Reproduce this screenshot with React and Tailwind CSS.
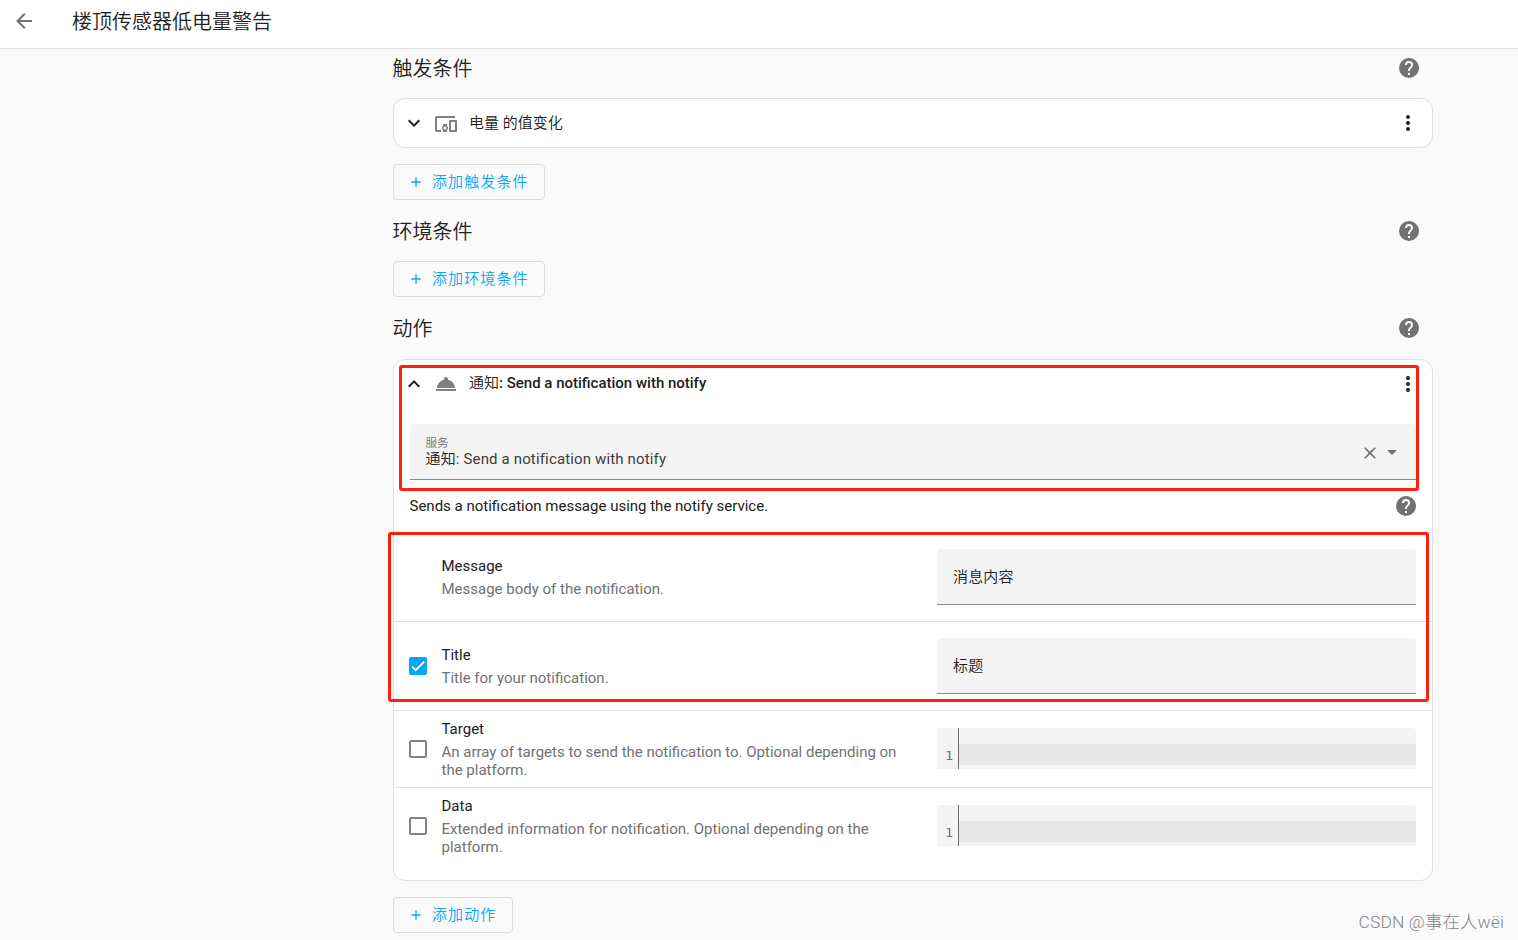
import clsx from "clsx";

const icons = {
  back: "M20,11V13H8L13.5,18.5L12.08,19.92L4.16,12L12.08,4.08L13.5,5.5L8,11H20Z",
  down: "M7.41,8.58L12,13.17L16.59,8.58L18,10L12,16L6,10L7.41,8.58Z",
  up: "M7.41,15.41L12,10.83L16.59,15.41L18,14L12,8L6,14L7.41,15.41Z",
  dots: "M12,16A2,2 0 0,1 14,18A2,2 0 0,1 12,20A2,2 0 0,1 10,18A2,2 0 0,1 12,16M12,10A2,2 0 0,1 14,12A2,2 0 0,1 12,14A2,2 0 0,1 10,12A2,2 0 0,1 12,10M12,4A2,2 0 0,1 14,6A2,2 0 0,1 12,8A2,2 0 0,1 10,6A2,2 0 0,1 12,4Z",
  devices:
    "M3 6H21V4H3C1.9 4 1 4.9 1 6V18C1 19.1 1.9 20 3 20H7V18H3V6M13 12H9V13.78C8.39 14.33 8 15.11 8 16C8 16.89 8.39 17.67 9 18.22V20H13V18.22C13.61 17.67 14 16.88 14 16S13.61 14.33 13 13.78V12M11 17.5C10.17 17.5 9.5 16.83 9.5 16S10.17 14.5 11 14.5 12.5 15.17 12.5 16 11.83 17.5 11 17.5M22 8H16C15.5 8 15 8.5 15 9V19C15 19.5 15.5 20 16 20H22C22.5 20 23 19.5 23 19V9C23 8.5 22.5 8 22 8M21 18H17V10H21V18Z",
  help: "M15.07,11.25L14.17,12.17C13.45,12.89 13,13.5 13,15H11V14.5C11,13.39 11.45,12.39 12.17,11.67L13.41,10.41C13.78,10.05 14,9.55 14,9C14,7.89 13.1,7 12,7A2,2 0 0,0 10,9H8A4,4 0 0,1 12,5A4,4 0 0,1 16,9C16,9.88 15.64,10.67 15.07,11.25M13,19H11V17H13M12,2A10,10 0 0,0 2,12A10,10 0 0,0 12,22A10,10 0 0,0 22,12C22,6.47 17.5,2 12,2Z",
  service:
    "M12,5A2,2 0 0,1 14,7C14,7.24 13.96,7.47 13.88,7.69C17.95,8.5 21,11.91 21,16H3C3,11.91 6.05,8.5 10.12,7.69C10.04,7.47 10,7.24 10,7A2,2 0 0,1 12,5M22,19H2V17H22V19Z",
  plus: "M19,13H13V19H11V13H5V11H11V5H13V11H19V13Z",
  close:
    "M19,6.41L17.59,5L12,10.59L6.41,5L5,6.41L10.59,12L5,17.59L6.41,19L12,13.41L17.59,19L19,17.59L13.41,12L19,6.41Z",
  caret: "M7,10L12,15L17,10H7Z",
};

const Icon = ({ name, className }) => (
  <svg viewBox="0 0 24 24" fill="currentColor" className={clsx("shrink-0", className)}>
    <path d={icons[name]} />
  </svg>
);

const SectionTitle = ({ children }) => (
  <div className="flex h-[38px] items-center justify-between pr-3">
    <h2 className="-ml-[0.5px] pt-px text-[20px] leading-7 font-[350]">{children}</h2>
    <Icon name="help" className="size-6 text-[#727272]" />
  </div>
);

const AddButton = ({ children }) => (
  <button className="flex h-9 items-center rounded border border-[#dcdcdc] pr-[15.5px] pl-[14.5px] text-[15px] font-[350] tracking-[1.1px] text-[#03a9f4]">
    <Icon name="plus" className="mr-2 -ml-[0.5px] size-4" />
    {children}
  </button>
);

const CardHeader = ({ chevron, icon, iconClass, children }) => (
  <div className="flex h-12 items-center pr-3 pl-2">
    <Icon name={chevron} className="mr-2 size-6" />
    <Icon name={icon} className={clsx("mr-[11px] size-6 text-[#7f7f7f]", iconClass)} />
    <div className="flex-1 text-[15px] leading-6">{children}</div>
    <Icon name="dots" className="size-6" />
  </div>
);

const Checkbox = ({ checked }) =>
  checked ? (
    <span className="flex size-[18px] items-center justify-center rounded-[2px] bg-[#03a9f4]">
      <svg viewBox="0 0 24 24" fill="none" stroke="white" strokeWidth="3.12" className="size-[14px]">
        <path d="M1.73,12.91 8.1,19.28 22.79,4.59" />
      </svg>
    </span>
  ) : (
    <span className="size-[18px] rounded-[2px] border-2 border-[#838383]" />
  );

const TextField = ({ value }) => (
  <div className="flex h-14 items-center rounded-t border-b border-[#8a8a8a] bg-[#f4f4f4] px-4 pt-[2px] text-[15px] font-[350] tracking-[0.15px]">
    {value}
  </div>
);

const CodeField = () => (
  <div className="mb-[2px] flex h-[41px] rounded-tr bg-[#f4f4f4]">
    <div className="w-[22px] border-r border-[#6f6f6f] pt-4 pr-[5px] text-right font-['DejaVu_Sans_Mono'] text-[13px] leading-6 text-[#727272]">
      1
    </div>
    <div className="mt-4 h-[21px] flex-1 bg-[#e7e7e7]" />
  </div>
);

const fields = [
  { name: "Message", description: "Message body of the notification.", value: "消息内容", required: true },
  { name: "Title", description: "Title for your notification.", value: "标题", checked: true },
  {
    name: "Target",
    description: "An array of targets to send the notification to. Optional depending on the platform.",
  },
  {
    name: "Data",
    description: "Extended information for notification. Optional depending on the platform.",
  },
];

const FieldRow = ({ field }) => (
  <div
    className={clsx(
      "flex items-center border-t border-[#dfdfdf] pr-4 pl-[15px]",
      field.value ? "h-[89px]" : "h-[77px]"
    )}
  >
    <div className="mr-[14.5px] flex w-[18px]">{!field.required && <Checkbox checked={field.checked} />}</div>
    <div className="w-[495.5px] pr-8 pb-1 text-[15px]">
      <div className="leading-7">{field.name}</div>
      <div className="leading-[18px] text-[#727272]">{field.description}</div>
    </div>
    <div className="flex-1">{field.value ? <TextField value={field.value} /> : <CodeField />}</div>
  </div>
);

export default function App() {
  return (
    <div className="relative h-[940px] w-[1518px] overflow-hidden bg-[#fafafa] font-[Roboto,'Noto_Sans_CJK_SC',sans-serif] text-[#212121]">
      <header className="flex h-[49px] items-center border-b border-[#dfdfdf] bg-white pb-[6px] pl-3">
        <Icon name="back" className="size-6 text-[#727272]" />
        <h1 className="ml-9 pt-[2px] text-[20px] font-[350]">楼顶传感器低电量警告</h1>
      </header>

      <main className="ml-[393px] w-[1040px]">
        <SectionTitle>触发条件</SectionTitle>
        <div className="mt-[11px] mb-4 rounded-xl border border-[#dfdfdf] bg-white">
          <CardHeader chevron="down" icon="devices" iconClass="mt-[2px]">
            <span className="font-[350]">电量 的值变化</span>
          </CardHeader>
        </div>
        <AddButton>添加触发条件</AddButton>

        <div className="mt-3 mb-[11px]">
          <SectionTitle>环境条件</SectionTitle>
        </div>
        <AddButton>添加环境条件</AddButton>

        <div className="mt-3 mb-3">
          <SectionTitle>动作</SectionTitle>
        </div>
        <div className="mb-4 h-[522px] rounded-xl border border-[#dfdfdf] bg-white">
          <CardHeader chevron="up" icon="service">
            <div className="pb-[2px]">
              <span className="font-[350]">通知</span>
              <span className="font-medium">: Send a notification with notify</span>
            </div>
          </CardHeader>
          <div className="mx-4 mt-4 flex h-14 items-center rounded-t border-b border-[#8a8a8a] bg-[#f4f4f4] pr-3 pl-4">
            <div className="-ml-[0.5px] flex-1 pb-[2px]">
              <div className="text-[11.5px] leading-4 text-[#7c7c7c]">服务</div>
              <div className="text-[15px] leading-4 tracking-[0.15px]">
                <span className="font-[350]">通知</span>
                <span className="text-[#3c3c3c]">: Send a notification with notify</span>
              </div>
            </div>
            <Icon name="close" className="mt-[3px] size-5 text-[#727272]" />
            <Icon name="caret" className="size-6 text-[#727272]" />
          </div>
          <div className="flex h-[52px] items-center justify-between pr-[14px] pl-[15.5px] text-[15px]">
            <p>Sends a notification message using the notify service.</p>
            <Icon name="help" className="size-6 text-[#727272]" />
          </div>
          {fields.map((field) => (
            <FieldRow key={field.name} field={field} />
          ))}
        </div>
        <AddButton>添加动作</AddButton>
      </main>

      {/* highlighted areas */}
      <div className="absolute top-[365px] left-[399px] h-[126px] w-[1020px] rounded-[3px] border-3 border-[#ff1f12]" />
      <div className="absolute top-[532px] left-[388px] h-[170px] w-[1041px] rounded-[3px] border-3 border-[#ff1f12]" />

      <div className="absolute right-[14px] bottom-[6px] font-[Roboto,'Noto_Sans_CJK_SC',sans-serif] text-[17.4px] leading-6 font-light tracking-[0.15px] text-[#858585]">
        CSDN @事在人wëi
      </div>
    </div>
  );
}
